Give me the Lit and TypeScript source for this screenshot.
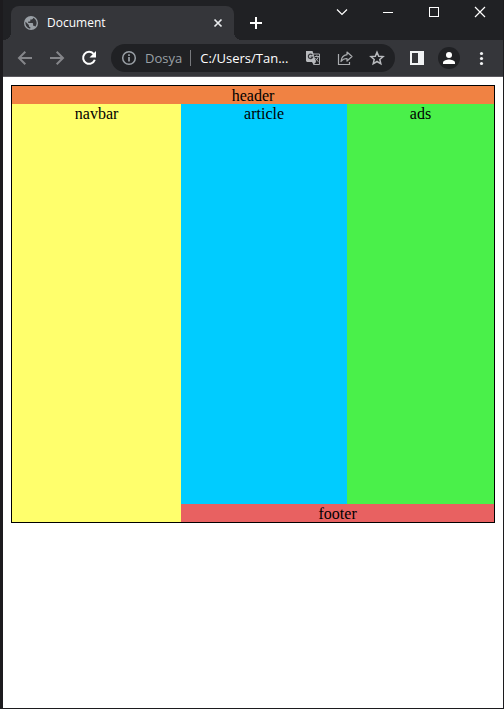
import { LitElement, html, css, svg } from "lit";
import { customElement } from "lit/decorators.js";

const icon = (size: number, body: unknown) =>
  html`<svg width=${size} height=${size} viewBox="0 0 ${size} ${size}" aria-hidden="true">${body}</svg>`;

const icons = {
  globe: icon(14, svg`<circle cx="7" cy="7" r="7" fill="#9aa0a6"/>
    <path d="M6.300 12.600C3.600 12.300 1.400 10 1.400 7c0-.5.1-.9.200-1.300L4.900 9v.7c0 .8.600 1.400 1.400 1.400z M11.100 10.800c-.2-.6-.7-1-1.300-1h-.7V7.700c0-.4-.3-.7-.7-.7H4.200V5.600h1.400c.4 0 .7-.3.7-.7V3.500h1.400c.8 0 1.400-.6 1.400-1.400v-.3c2 .8 3.500 2.800 3.500 5.200 0 1.500-.6 2.800-1.500 3.800z" fill="#35363a"/>`),
  tabClose: icon(16, svg`<path d="M4.500 4.500l7 7M11.500 4.500l-7 7" stroke="#e8eaed" stroke-width="1.700"/>`),
  plus: icon(16, svg`<path d="M8 2v12M2 8h12" stroke="#fff" stroke-width="2"/>`),
  chevron: icon(12, svg`<path d="M1 3.500l5 5 5-5" fill="none" stroke="#fff" stroke-width="1.200"/>`),
  minimize: icon(12, svg`<path d="M1 6.500h10" stroke="#fff"/>`),
  maximize: icon(12, svg`<rect x="1.500" y="1.500" width="9" height="9" fill="none" stroke="#fff"/>`),
  close: icon(12, svg`<path d="M1 1l10 10M11 1L1 11" stroke="#fff" stroke-width="1.200"/>`),
  back: icon(16, svg`<path d="M15 8H2.500M8.300 1.700L2 8l6.300 6.300" fill="none" stroke="#85868a" stroke-width="2"/>`),
  forward: icon(16, svg`<path d="M1 8h12.500M7.700 1.700L14 8l-6.300 6.300" fill="none" stroke="#85868a" stroke-width="2"/>`),
  reload: icon(16, svg`<path d="M12.600 3.800A6 6 0 1 0 13.800 9.700" fill="none" stroke="#fff" stroke-width="2"/>
    <path d="M15 1v6.500H8.500z" fill="#fff"/>`),
  info: icon(16, svg`<circle cx="8" cy="8" r="6.300" fill="none" stroke="#9aa0a6" stroke-width="1.500"/>
    <path d="M8 7v4.500M8 4.300v1.700" stroke="#9aa0a6" stroke-width="1.700"/>`),
  translate: icon(16, svg`<path d="M7 4h7.500v10.500H8.500" fill="none" stroke="#a9abae"/>
    <path d="M1 1h6.500l3.500 11H2.500C1.700 12 1 11.300 1 10.500z" fill="#b9bbbe"/>
    <path d="M7 12l1.500 2.800L11 12z" fill="#b9bbbe"/>
    <path d="M7.300 5A2.200 2.200 0 1 0 7.700 7H5.500" fill="none" stroke="#35363a" stroke-width="1.200"/>
    <path d="M9.700 6.500H14M11.800 5.300v1.200M13.200 6.500c-.3 2-1.300 3.300-3 4.300M10.500 8c.7 1.600 1.700 2.800 3 3.700" fill="none" stroke="#a9abae"/>`),
  share: icon(16, svg`<path d="M1.500 4v10.500h11V12" fill="none" stroke="#a9abae" stroke-width="1.200"/>
    <path d="M10 2l5 4.500-5 4.500V8.500C7.500 8.500 5.500 9.300 4 11.500c.3-3.500 2.300-6.300 6-6.800z" fill="none" stroke="#a9abae" stroke-width="1.200" stroke-linejoin="round"/>`),
  star: icon(16, svg`<path d="M8 2.200l1.700 4 4.400.4-3.300 2.900 1 4.300L8 11.500l-3.800 2.300 1-4.300-3.300-2.900 4.400-.4z" fill="none" stroke="#b9bbbe" stroke-width="1.500"/>`),
  panel: icon(16, svg`<path d="M1 1h14v14H1zM3 3v10h6V3z" fill="#f1f3f4" fill-rule="evenodd"/>`),
  avatar: icon(22, svg`<circle cx="11" cy="11" r="11" fill="#202124"/>
    <circle cx="11" cy="8" r="3" fill="#fff"/>
    <path d="M5 17v-1.500c0-2 4-3 6-3s6 1 6 3V17z" fill="#fff"/>`),
  more: icon(16, svg`<circle cx="8.500" cy="3.500" r="1.600" fill="#f1f3f4"/><circle cx="8.500" cy="8.500" r="1.600" fill="#f1f3f4"/><circle cx="8.500" cy="13.500" r="1.600" fill="#f1f3f4"/>`),
};

const button = (label: string, cls: string, glyph: unknown) =>
  html`<button type="button" class=${cls} aria-label=${label}>${glyph}</button>`;

@customElement("browser-tabs")
class BrowserTabs extends LitElement {
  static styles = css`
    :host {
      display: flex;
      justify-content: space-between;
      height: 40px;
      background: #202124;
      font-family: "Open Sans", "Noto Sans", sans-serif;
    }
    button {
      display: flex;
      align-items: center;
      justify-content: center;
      padding: 0;
      border: 0;
      background: none;
    }
    .strip {
      display: flex;
      align-items: flex-end;
      flex: 1;
      min-width: 0;
      padding-left: 8px;
    }
    .tab {
      position: relative;
      display: flex;
      align-items: center;
      box-sizing: border-box;
      flex: 0 1 223px;
      min-width: 0;
      height: 34px;
      padding: 0 8px 0 13px;
      border-radius: 8px 8px 0 0;
      background: #35363a;
      color: #fff;
    }
    .tab::before,
    .tab::after {
      content: "";
      position: absolute;
      bottom: 0;
      width: 8px;
      height: 8px;
    }
    .tab::before {
      right: 100%;
      background: radial-gradient(circle at 0 0, #202124 8px, #35363a 8px);
    }
    .tab::after {
      left: 100%;
      background: radial-gradient(circle at 100% 0, #202124 8px, #35363a 8px);
    }
    .title {
      flex: 1;
      margin-left: 9px;
      font-size: 12px;
      line-height: 16px;
    }
    .tab-close {
      width: 16px;
      height: 16px;
    }
    .new-tab {
      width: 28px;
      height: 34px;
      margin-left: 8px;
    }
    .controls {
      display: flex;
    }
    .control {
      width: 46px;
      height: 24px;
    }
  `;

  render() {
    return html`
      <div class="strip">
        <div class="tab">
          ${icons.globe}
          <span class="title">Document</span>
          ${button("Close tab", "tab-close", icons.tabClose)}
        </div>
        ${button("New tab", "new-tab", icons.plus)}
      </div>
      <div class="controls">
        ${button("Search tabs", "control", icons.chevron)}
        ${button("Minimize", "control", icons.minimize)}
        ${button("Maximize", "control", icons.maximize)}
        ${button("Close", "control", icons.close)}
      </div>
    `;
  }
}

@customElement("browser-toolbar")
class BrowserToolbar extends LitElement {
  static styles = css`
    :host {
      display: flex;
      align-items: center;
      box-sizing: border-box;
      height: 37px;
      padding: 0 6px;
      border-bottom: 1px solid #5a585e;
      background: #35363a;
      font-family: "Open Sans", "Noto Sans", sans-serif;
      font-size: 13px;
    }
    button {
      display: flex;
      align-items: center;
      justify-content: center;
      flex: none;
      width: 32px;
      height: 28px;
      padding: 0;
      border: 0;
      background: none;
    }
    .address {
      display: flex;
      align-items: center;
      flex: 1;
      min-width: 0;
      height: 28px;
      margin: 0 6px;
      padding: 0 2px 0 10px;
      box-sizing: border-box;
      border-radius: 14px;
      background: #202124;
    }
    .site {
      gap: 8px;
      width: auto;
      color: #9aa0a6;
      font: inherit;
    }
    .divider {
      width: 1px;
      height: 16px;
      margin: 0 9px 0 8px;
      background: #77797d;
    }
    .url {
      flex: 1;
      min-width: 0;
      padding: 0;
      border: 0;
      outline: 0;
      background: none;
      color: #fff;
      font: inherit;
    }
  `;

  render() {
    return html`
      ${button("Back", "tool", icons.back)}
      ${button("Forward", "tool", icons.forward)}
      ${button("Reload", "tool", icons.reload)}
      <div class="address">
        <button type="button" class="site">${icons.info}<span>Dosya</span></button>
        <span class="divider"></span>
        <input class="url" type="text" aria-label="Address" value="C:/Users/Tan..." />
        ${button("Translate", "tool", icons.translate)}
        ${button("Share", "tool", icons.share)}
        ${button("Bookmark", "tool", icons.star)}
      </div>
      ${button("Side panel", "tool", icons.panel)}
      ${button("Profile", "tool", icons.avatar)}
      ${button("Menu", "tool", icons.more)}
    `;
  }
}

@customElement("document-page")
class DocumentPage extends LitElement {
  static styles = css`
    :host {
      display: block;
      padding: 8px;
      background: #fff;
      color: #000;
      font-family: "Liberation Serif", "Times New Roman", serif;
      font-size: 16px;
      line-height: 17px;
      text-align: center;
    }
    .layout {
      display: grid;
      grid-template-columns: auto auto auto;
      grid-template-areas:
        "header header header"
        "navbar article ads"
        "navbar footer footer";
      border: 1px solid #000;
    }
    .layout > * {
      box-sizing: border-box;
      padding-top: 1px;
    }
    .header {
      grid-area: header;
      background: #f08243;
    }
    .navbar {
      grid-area: navbar;
      background: #ffff6c;
    }
    .article {
      grid-area: article;
      min-height: 400px;
      background: #00ccff;
    }
    .ads {
      grid-area: ads;
      background: #4af04a;
    }
    .footer {
      grid-area: footer;
      background: #e86161;
    }
  `;

  render() {
    return html`
      <div class="layout">
        <header class="header">header</header>
        <nav class="navbar">navbar</nav>
        <article class="article">article</article>
        <aside class="ads">ads</aside>
        <footer class="footer">footer</footer>
      </div>
    `;
  }
}

@customElement("app-root")
class AppRoot extends LitElement {
  static styles = css`
    :host {
      display: flex;
      flex-direction: column;
      box-sizing: border-box;
      min-height: 100vh;
      border: solid #1c1b1e;
      border-width: 0 1px 1px 3px;
      background: #fff;
    }
    .page {
      flex: 1;
    }
  `;

  render() {
    return html`
      <browser-tabs></browser-tabs>
      <browser-toolbar></browser-toolbar>
      <document-page class="page"></document-page>
    `;
  }
}
